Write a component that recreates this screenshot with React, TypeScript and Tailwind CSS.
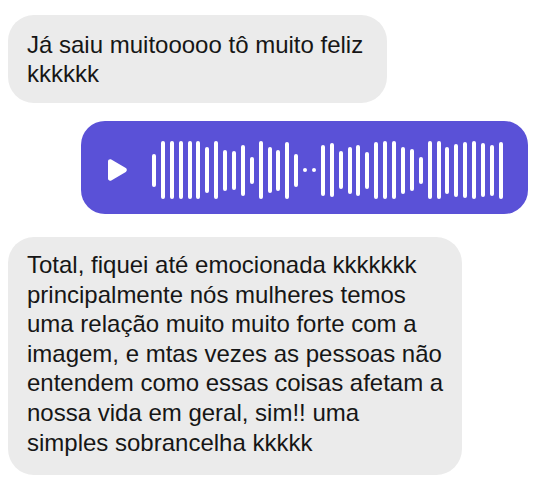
import React from 'react';

const topLines = ['Já saiu muitooooo tô muito feliz', 'kkkkkk'];

const bottomLines = [
  'Total, fiquei até emocionada kkkkkkk',
  'principalmente nós mulheres temos',
  'uma relação muito muito forte com a',
  'imagem, e mtas vezes as pessoas não',
  'entendem como essas coisas afetam a',
  'nossa vida em geral, sim!! uma',
  'simples sobrancelha kkkkk',
];

// bar heights in px, 0 = dot
const wave = [
  33, 58, 58, 58, 58, 58, 46, 58, 41, 39, 51, 27, 58, 46, 41, 57, 33, 0, 0, 51,
  54, 38, 47, 51, 37, 57, 58, 58, 47, 42, 27, 58, 58, 47, 53, 56, 58, 54, 51, 57,
];

function Bubble({ lines, className }: { lines: string[]; className?: string }) {
  return (
    <div
      className={`self-start rounded-[26px] bg-[#ebebeb] text-[#161616] text-[24px] ${className ?? ''}`}
      style={{ fontFamily: '"Liberation Sans", Arial, sans-serif' }}
    >
      {lines.map((line, i) => (
        <div key={i} className="whitespace-nowrap">
          {line}
        </div>
      ))}
    </div>
  );
}

function PlayIcon() {
  return (
    <svg width="22" height="24" viewBox="0 0 22 24" className="shrink-0">
      <path
        d="M2 3.4 C2 1.6 3.8 0.6 5.3 1.5 L19.8 10.1 C21.2 10.9 21.2 13.1 19.8 13.9 L5.3 22.5 C3.8 23.4 2 22.4 2 20.6 Z"
        fill="#ffffff"
      />
    </svg>
  );
}

function AudioBubble() {
  return (
    <div className="self-end mt-[18px] flex items-center w-[447px] h-[93px] rounded-[24px] bg-[#5a51d7] pl-[25px] pt-[5px]">
      <PlayIcon />
      <div className="ml-[24px] flex items-center gap-[4.9px]">
        {wave.map((h, i) =>
          h === 0 ? (
            <div key={i} className="w-[4px] h-[4px] rounded-full bg-white" />
          ) : (
            <div
              key={i}
              className="w-[4px] rounded-full bg-white"
              style={{ height: h }}
            />
          )
        )}
      </div>
    </div>
  );
}

export default function App() {
  return (
    <div className="w-[536px] h-[485px] bg-white overflow-hidden">
      <div className="flex flex-col px-2 pt-[15px]">
        <Bubble lines={topLines} className="leading-[29px] pl-[19px] pr-[24px] pt-[15px] pb-[15px]" />
        <AudioBubble />
        <Bubble lines={bottomLines} className="mt-[23px] leading-[29.6px] pl-[19px] pr-[19px] pt-[13px] pb-[18px]" />
      </div>
    </div>
  );
}
